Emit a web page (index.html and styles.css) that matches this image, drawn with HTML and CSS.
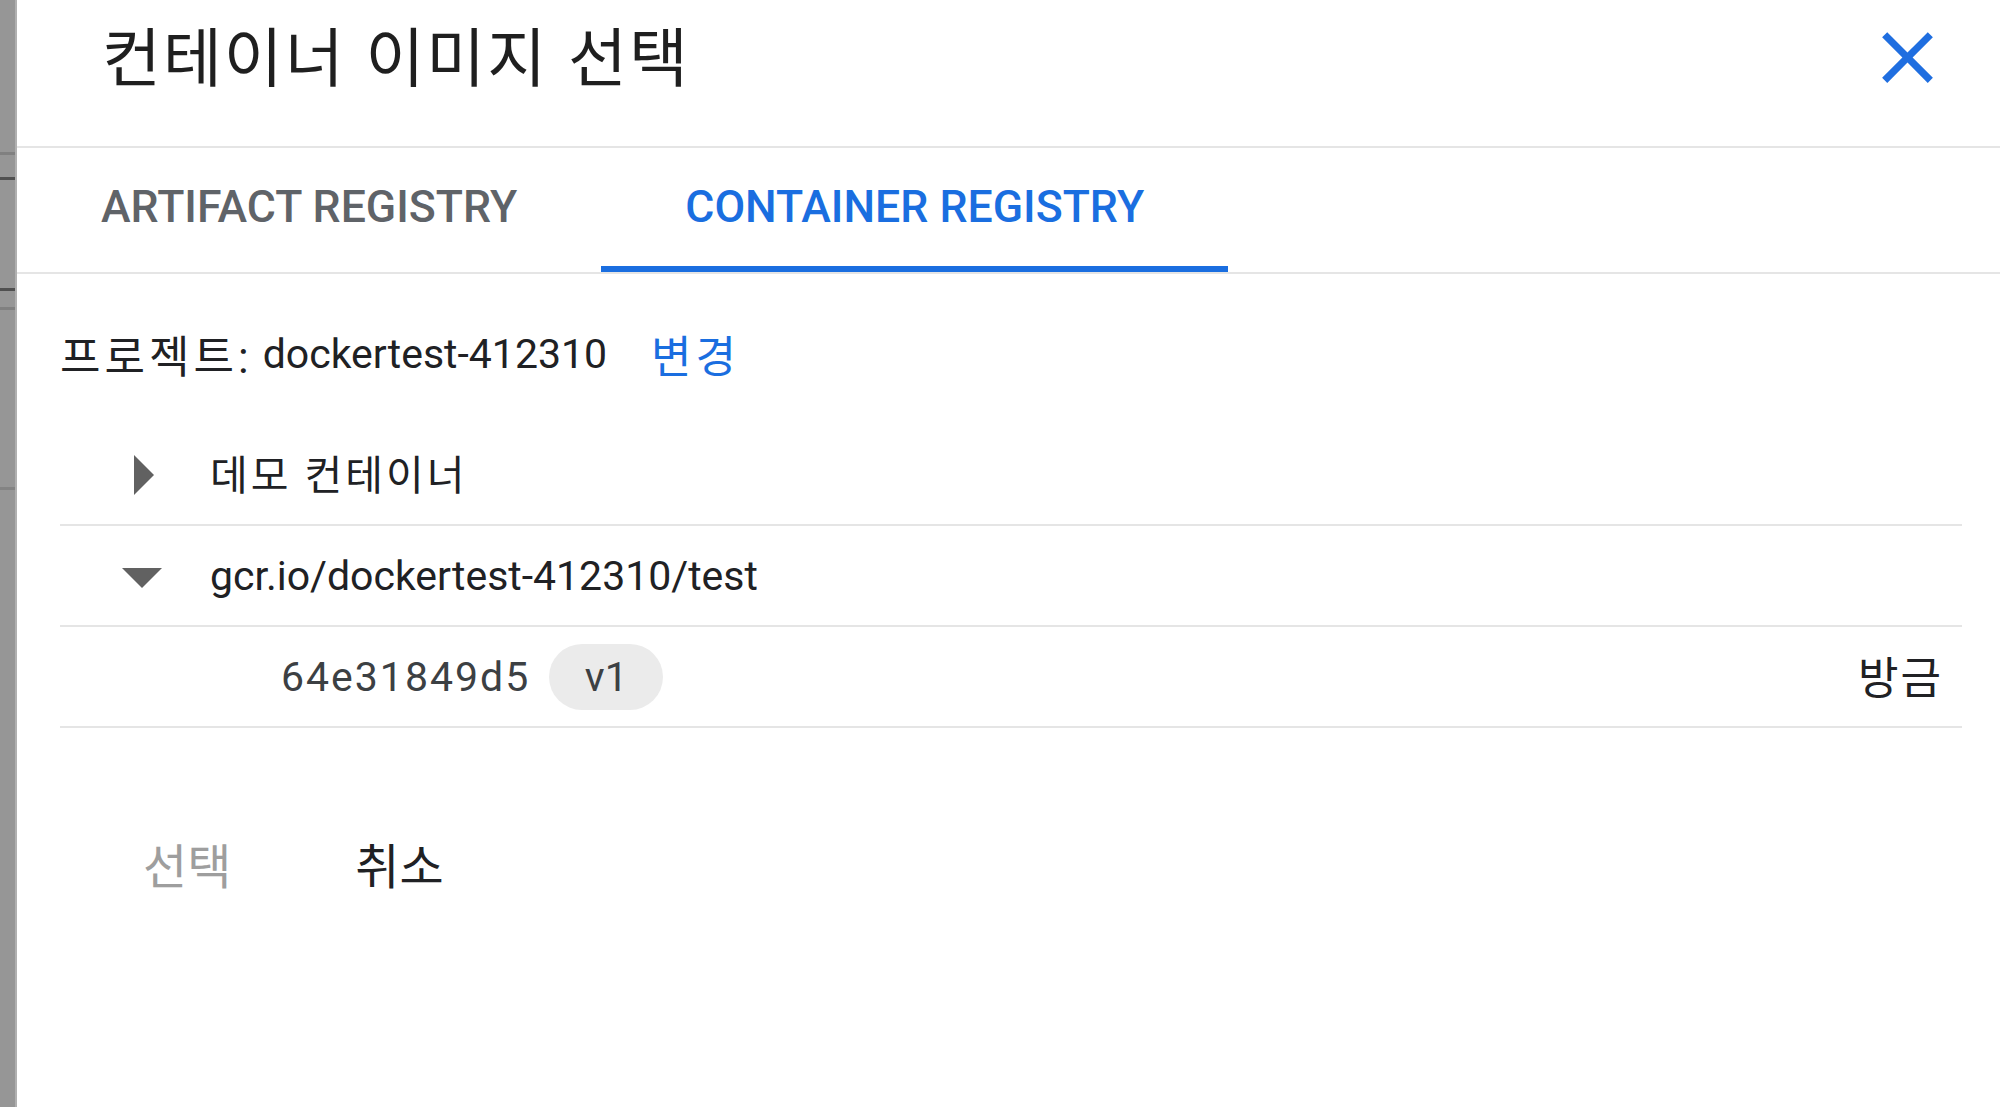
FILE: index.html
```html
<!DOCTYPE html>
<html lang="ko">
<head>
<meta charset="utf-8">
<title>컨테이너 이미지 선택</title>
<link rel="stylesheet" href="styles.css">
</head>
<body>
<div class="page">
  <div class="backdrop"></div>
  <div class="dialog">
    <header class="dialog-header">
      <h1 class="dialog-title">컨테이너 이미지 선택</h1>
      <button class="close-btn" aria-label="닫기">
        <svg viewBox="0 0 24 24"><path d="M19 6.41L17.59 5 12 10.59 6.41 5 5 6.41 10.59 12 5 17.59 6.41 19 12 13.41 17.59 19 19 17.59 13.41 12z"/></svg>
      </button>
    </header>
    <nav class="tabs">
      <div class="tab">ARTIFACT REGISTRY</div>
      <div class="tab active">CONTAINER REGISTRY</div>
    </nav>
    <section class="content">
      <div class="project"><span class="ko">프로젝트:</span>&nbsp;<span>dockertest-412310</span><a class="change ko">변경</a></div>
      <div class="tree">
        <div class="tree-row">
          <svg class="arrow" viewBox="0 0 24 24"><path d="M10 17l5-5-5-5v10z"/></svg>
          <span class="label label-ko">데모 컨테이너</span>
        </div>
        <div class="tree-row">
          <svg class="arrow" viewBox="0 0 24 24"><path d="M7 10l5 5 5-5z"/></svg>
          <span class="label">gcr.io/dockertest-412310/test</span>
        </div>
        <div class="tree-row leaf">
          <span class="digest">64e31849d5</span>
          <span class="chip">v1</span>
          <span class="time">방금</span>
        </div>
      </div>
      <div class="actions">
        <button class="btn disabled">선택</button>
        <button class="btn">취소</button>
      </div>
    </section>
  </div>
</div>
</body>
</html>
```

FILE: styles.css
```css
html, body {
  margin: 0;
  padding: 0;
  background: #ffffff;
}

body {
  font-family: Roboto, "Noto Sans CJK KR", sans-serif;
  color: #202124;
}

.page {
  display: flex;
  height: 1107px;
  overflow: hidden;
}

.backdrop {
  flex: none;
  width: 17px;
  background:
    linear-gradient(to bottom,
      #969696 0px, #969696 152px,
      #808080 152px, #808080 155px,
      #969696 155px, #969696 177px,
      #505050 177px, #505050 180px,
      #969696 180px, #969696 288px,
      #505050 288px, #505050 291px,
      #969696 291px, #969696 307px,
      #808080 307px, #808080 310px,
      #969696 310px, #969696 487px,
      #838383 487px, #838383 490px,
      #969696 490px, #969696 100%);
  box-shadow: inset -2px 0 0 #b0b0b0;
}

.dialog {
  flex: 1;
  display: flex;
  flex-direction: column;
}

.dialog-header {
  height: 146px;
  border-bottom: 2px solid #e5e5e5;
  display: flex;
  align-items: flex-start;
  justify-content: space-between;
  padding: 0 49px 0 85px;
}

.dialog-title {
  margin: 0;
  padding-top: 18px;
  font-family: "Noto Sans CJK KR", sans-serif;
  font-weight: 400;
  font-size: 64px;
  line-height: 70px;
  letter-spacing: 2px;
  color: #1f1f1f;
}

.close-btn {
  border: 0;
  background: none;
  padding: 0;
  margin-top: 14px;
  width: 87px;
  height: 87px;
}

.close-btn svg {
  display: block;
  width: 87px;
  height: 87px;
  fill: #1f6ee0;
}

.tabs {
  display: flex;
  border-bottom: 2px solid #e5e5e5;
}

.tab {
  height: 118px;
  padding: 0 84px;
  display: flex;
  align-items: center;
  font-family: Roboto, sans-serif;
  font-weight: 500;
  font-size: 44.6px;
  color: #5f6368;
  border-bottom: 6px solid transparent;
}

.tab.active {
  color: #1a6ee0;
  border-bottom-color: #1a6ee0;
}

.content {
  padding: 0 38px 0 43px;
}

.project {
  margin-top: 50px;
  margin-bottom: 41px;
  height: 60px;
  display: flex;
  align-items: center;
  font-size: 41px;
  color: #202124;
}

.ko {
  font-size: 44px;
  letter-spacing: 4px;
}

.change {
  margin-left: 44px;
  color: #1a6ee0;
}

.tree-row {
  height: 99px;
  border-bottom: 2px solid #e5e5e5;
  display: flex;
  align-items: center;
  font-size: 41px;
  color: #202124;
}

.arrow {
  flex: none;
  width: 96px;
  height: 96px;
  margin-left: 34px;
  margin-right: 20px;
  fill: #616161;
}

.label-ko {
  letter-spacing: 3px;
  padding-bottom: 6px;
}

.tree-row.leaf {
  padding: 0 19px 0 221px;
}

.digest {
  letter-spacing: 2px;
  color: #3c4043;
}

.chip {
  margin-left: 19px;
  width: 114px;
  height: 66px;
  border-radius: 33px;
  background: #ebebeb;
  color: #3c4043;
  display: flex;
  align-items: center;
  justify-content: center;
}

.time {
  margin-left: auto;
  font-size: 44px;
  letter-spacing: 2px;
  padding-bottom: 4px;
}

.actions {
  display: flex;
  gap: 44px;
  margin-top: 90px;
  padding-left: 43px;
}

.btn {
  height: 90px;
  padding: 0 40px;
  border: 0;
  background: none;
  font-family: Roboto, "Noto Sans CJK KR", sans-serif;
  font-size: 48px;
  color: #202124;
}

.btn.disabled {
  color: #9e9e9e;
}
```
